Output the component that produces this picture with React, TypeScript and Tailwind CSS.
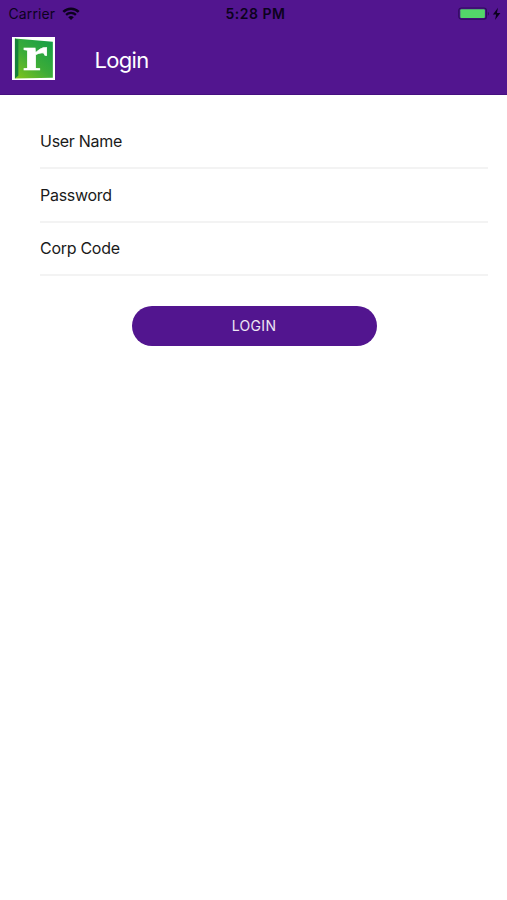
import { useState } from "react";

interface Field {
  name: string;
  label: string;
  type: string;
}

const fields: Field[] = [
  { name: "username", label: "User Name", type: "text" },
  { name: "password", label: "Password", type: "password" },
  { name: "corpCode", label: "Corp Code", type: "text" },
];

function WifiIcon() {
  return (
    <svg width="18" height="14" viewBox="0 0 18 14" fill="none" stroke="#0c021d">
      <path d="M1.3 4.8a11 11 0 0 1 15.4 0" strokeWidth="2.5" />
      <path d="M4.1 7.9a7 7 0 0 1 9.8 0" strokeWidth="2.3" />
      <path d="M9 13 6.2 10.3a4 4 0 0 1 5.6 0Z" fill="#0c021d" stroke="none" />
    </svg>
  );
}

function BatteryIcon() {
  return (
    <svg width="44" height="14" viewBox="0 0 44 14">
      <rect x="0.8" y="1" width="27.6" height="11.2" rx="2.6" fill="none" stroke="#2f0d5c" strokeWidth="1.2" />
      <rect x="2.3" y="2.3" width="24.6" height="8.6" rx="1" fill="#53d769" />
      <path d="M29.8 4.8c1.6.6 1.6 3.4 0 4Z" fill="#2f0d5c" />
      <path d="M40 0.8 34.9 7.6h3.3l-1.2 5.4 5.4-7h-3.5Z" fill="#0c021d" />
    </svg>
  );
}

function Logo() {
  return (
    <svg width="43" height="43" viewBox="0 0 44 44" className="overflow-visible">
      <defs>
        <linearGradient id="logo" x1="0" y1="1" x2="0.8" y2="0">
          <stop offset="0" stopColor="#83c51c" />
          <stop offset="0.5" stopColor="#3cac38" />
          <stop offset="1" stopColor="#18a046" />
        </linearGradient>
      </defs>
      <rect width="44" height="44" fill="#fff" />
      <path d="M3 1.5 41.8 4.8v37L3 42.5Z" fill="url(#logo)" />
      <path d="M3 1.5 6.5 3V39.5L3 42.5Z" fill="#16823a" />
      <text
        x="10.8"
        y="33.5"
        fontSize="49"
        fontWeight="700"
        fill="#fff"
        stroke="#fff"
        strokeWidth="0.6"
        textLength="26"
        lengthAdjust="spacingAndGlyphs"
        className="font-['Liberation_Serif',serif] leading-none"
      >
        r
      </text>
    </svg>
  );
}

export default function App() {
  const [values, setValues] = useState<Record<string, string>>({});

  return (
    <div className="min-h-screen bg-white font-['Inter',sans-serif]">
      <header className="h-[95px] bg-[#52158f] border-b border-[#46107f]">
        <div className="h-[27px] grid grid-cols-3 items-center pl-[8.5px] pr-[4.5px] text-[#0c021d] text-sm">
          <div className="flex items-center gap-[7px]">
            <span className="tracking-[0.1px]">Carrier</span>
            <WifiIcon />
          </div>
          <span className="text-center font-semibold tracking-[0.5px]">5:28 PM</span>
          <div className="flex justify-end pr-[0.5px]">
            <BatteryIcon />
          </div>
        </div>
        <div className="flex items-center pt-[9.5px] pl-3 gap-[39.5px]">
          <Logo />
          <h1 className="text-white text-[22px] leading-7 tracking-[-0.7px] pt-1">Login</h1>
        </div>
      </header>
      <form className="pt-5 pl-10 pr-[19px]" onSubmit={(e) => e.preventDefault()}>
        {fields.map((field) => (
          <input
            key={field.name}
            type={field.type}
            aria-label={field.label}
            placeholder={field.label}
            value={values[field.name] ?? ""}
            onChange={(e) => setValues({ ...values, [field.name]: e.target.value })}
            className="block w-full h-[53.8px] border-b-2 border-[#f3f3f3] text-base tracking-[-0.28px] text-[#1a1a1a] placeholder:text-[#1a1a1a] outline-none"
          />
        ))}
        <button
          type="submit"
          className="block w-[245px] h-10 mt-[30px] ml-[91.5px] rounded-full bg-[#52158f] text-white/90 text-sm tracking-[0.3px]"
        >
          LOGIN
        </button>
      </form>
    </div>
  );
}
